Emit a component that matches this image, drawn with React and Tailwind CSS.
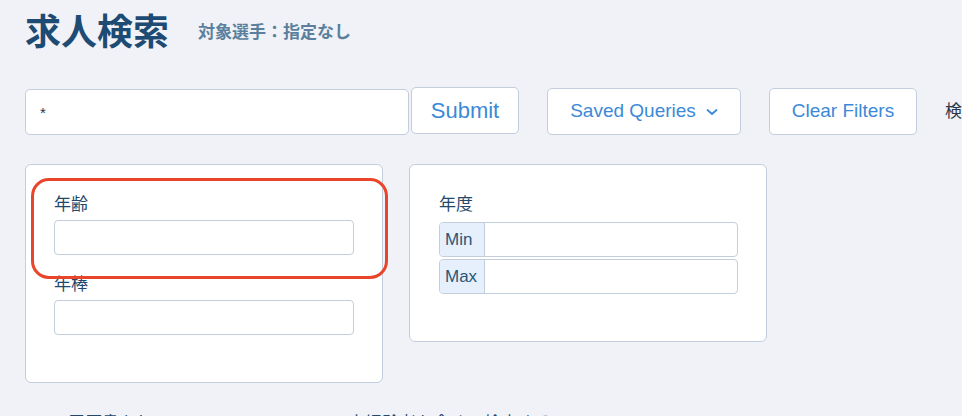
import React from "react";

const jp = { fontFamily: '"Liberation Sans", "Noto Sans CJK JP", sans-serif' };

function RangeInput({ label }) {
  return (
    <div className="flex h-[35px] w-[299px] rounded-[4px] border border-[#c2cedb] bg-white overflow-hidden">
      <div className="flex w-[45px] items-center border-r border-[#c2cedb] bg-[#e5f0fc] pl-[5px] text-[17px] text-[#2b5676]">
        {label}
      </div>
      <input className="min-w-0 flex-1 outline-none" />
    </div>
  );
}

function App() {
  return (
    <div className="h-[416px] w-[962px] overflow-hidden bg-[#f0f2f7] pl-[25px]" style={jp}>
      {/* Header */}
      <div className="flex items-center pt-[12px]">
        <h1 className="text-[36px] leading-[42px] font-bold text-[#1d4b73]">求人検索</h1>
        <span className="ml-[29px] text-[17px] font-bold text-[#5b7f9c]">対象選手：指定なし</span>
      </div>

      {/* Search bar */}
      <div className="mt-[33px] flex items-start whitespace-nowrap">
        <input
          defaultValue="*"
          className="mt-[2px] h-[46px] w-[384px] shrink-0 rounded-[5px] border border-[#c2cedb] bg-white px-[14px] text-[15px] text-[#1d3550] outline-none"
        />
        <button className="ml-[2px] h-[47px] w-[108px] shrink-0 rounded-[5px] border border-[#c2cedb] bg-white text-[22px] text-[#3b89d8]">
          Submit
        </button>
        <button className="mt-[1px] ml-[28px] flex h-[47px] w-[194px] shrink-0 items-center justify-center gap-[10px] rounded-[5px] border border-[#c2cedb] bg-white text-[19px] text-[#3b89d8]">
          Saved Queries
          <svg width="12" height="8" viewBox="0 0 12 8" fill="none">
            <path d="M1.5 2 L6 6 L10.5 2" stroke="#3b89d8" strokeWidth="1.8" strokeLinecap="round" strokeLinejoin="round" />
          </svg>
        </button>
        <button className="mt-[1px] ml-[28px] h-[47px] w-[148px] shrink-0 rounded-[5px] border border-[#c2cedb] bg-white text-[19px] text-[#3b89d8]">
          Clear Filters
        </button>
        <span className="ml-[28px] mt-[12px] shrink-0 text-[17px] text-[#2a3a4a]">検索結果</span>
      </div>

      {/* Filter cards */}
      <div className="mt-[29px] flex items-start">
        <div className="relative h-[219px] w-[358px] shrink-0 rounded-[6px] border border-[#c2cedb] bg-white px-[28px] pt-[28px]">
          <div className="text-[17px] leading-[24px] text-[#23486a]">年齢</div>
          <input className="mt-[3px] h-[35px] w-[300px] rounded-[4px] border border-[#c2cedb] outline-none" />
          <div className="mt-[18px] text-[17px] leading-[24px] text-[#23486a]">年棒</div>
          <input className="mt-[3px] h-[35px] w-[300px] rounded-[4px] border border-[#c2cedb] outline-none" />
          <div className="absolute left-[5px] top-[13px] h-[101px] w-[357px] rounded-[18px] border-[3px] border-[#e8452b]" />
        </div>

        <div className="ml-[26px] h-[178px] w-[358px] shrink-0 rounded-[6px] border border-[#c2cedb] bg-white pl-[29px] pt-[28px]">
          <div className="text-[17px] leading-[24px] text-[#23486a]">年度</div>
          <div className="mt-[5px] flex flex-col gap-[2px]">
            <RangeInput label="Min" />
            <RangeInput label="Max" />
          </div>
        </div>
      </div>

      {/* Options */}
      <div className="mt-[28px] flex items-center pl-[19px] text-[17px] text-[#23486a] whitespace-nowrap">
        <span className="h-[14px] w-[14px] rounded-[3px] border border-[#b7c3d0] bg-[#e6ebf1]" />
        <span className="ml-[10px]">履歴書あり</span>
        <span className="ml-[195px]">未経験者も含めて検索する</span>
      </div>
    </div>
  );
}

export default App;
